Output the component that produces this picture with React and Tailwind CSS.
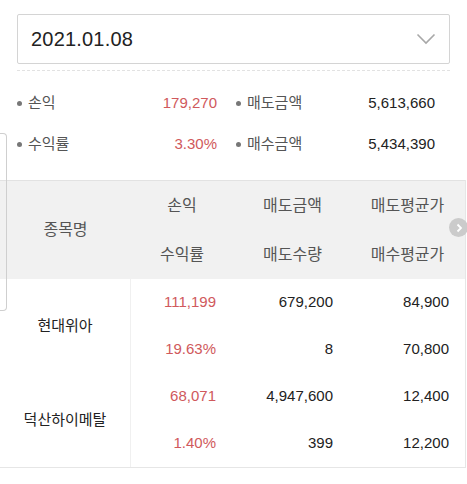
import React from "react";

const font = { fontFamily: '"Liberation Sans", "Noto Sans CJK KR", sans-serif' };

const summary = [
  { label: "손익", value: "179,270", red: true, label2: "매도금액", value2: "5,613,660" },
  { label: "수익률", value: "3.30%", red: true, label2: "매수금액", value2: "5,434,390" },
];

const stocks = [
  { name: "현대위아", rows: [["111,199", "679,200", "84,900"], ["19.63%", "8", "70,800"]] },
  { name: "덕산하이메탈", rows: [["68,071", "4,947,600", "12,400"], ["1.40%", "399", "12,200"]] },
];

const Bullet = () => <span className="w-[5px] h-[5px] rounded-full bg-[#777] mr-[6px] shrink-0" />;

const App = () => (
  <div className="relative w-[467px] h-[484px] bg-white overflow-hidden text-[15px]" style={font}>
    <div className="px-[17px] pt-[14px]">
      <div className="h-[50px] border border-[#d4d4d4] rounded-[2px] flex items-center justify-between pl-[13px] pr-[13px]">
        <span className="text-[20px] text-[#222] tracking-[0.2px]">2021.01.08</span>
        <svg width="20" height="12" viewBox="0 0 20 12" fill="none">
          <path d="M1.5 1.5 L10 10 L18.5 1.5" stroke="#a8a8a8" strokeWidth="1.6" />
        </svg>
      </div>
      <div className="mt-[6px] border-t border-dashed border-[#e2e2e2] w-[433px]" />
      <div className="pt-[12px] pb-[15px]">
        {summary.map((s) => (
          <div key={s.label} className="flex h-[41px] items-center">
            <div className="w-[200px] flex items-center">
              <Bullet />
              <span className="text-[#555]">{s.label}</span>
              <span className={`ml-auto ${s.red ? "text-[#d0595c]" : "text-[#222]"}`}>{s.value}</span>
            </div>
            <div className="w-[199px] ml-[19px] flex items-center">
              <Bullet />
              <span className="text-[#555]">{s.label2}</span>
              <span className="ml-auto text-[#222]">{s.value2}</span>
            </div>
          </div>
        ))}
      </div>
    </div>

    <div className="w-[466px] border-r border-[#e6e6e6]">
      <div className="flex bg-[#f1f1f1] border-t border-[#e2e2e2] h-[99px] text-[#555] text-[16px]">
        <div className="w-[131px] flex items-center justify-center">종목명</div>
        <div className="flex-1 grid grid-cols-[104px_115px_1fr] grid-rows-2">
          <div className="flex items-center justify-center pr-[2px]">손익</div>
          <div className="flex items-center justify-center">매도금액</div>
          <div className="flex items-center justify-center">매도평균가</div>
          <div className="flex items-center justify-center pr-[2px]">수익률</div>
          <div className="flex items-center justify-center">매도수량</div>
          <div className="flex items-center justify-center">매수평균가</div>
        </div>
      </div>
      <div className="border-b border-[#e6e6e6]">
        {stocks.map((st) => (
          <div key={st.name} className="flex h-[94px]">
            <div className="w-[131px] border-r border-[#f0f0f0] flex items-center justify-center text-[#222]">{st.name}</div>
            <div className="flex-1 flex flex-col">
              {st.rows.map((r, i) => (
                <div key={i} className="flex-1 grid grid-cols-[104px_115px_1fr] items-center">
                  <span className="text-right pr-[19px] text-[#d0595c]">{r[0]}</span>
                  <span className="text-right pr-[17px] text-[#222]">{r[1]}</span>
                  <span className="text-right pr-[16px] text-[#222]">{r[2]}</span>
                </div>
              ))}
            </div>
          </div>
        ))}
      </div>
    </div>

    <div className="absolute left-0 top-[133px] w-[7px] h-[178px] border border-l-0 border-[#cfcfcf] rounded-r-[4px]" />
    <div className="absolute left-[449px] top-[218px] w-[19px] h-[19px] rounded-full bg-[#cbcbcb] flex items-center justify-center">
      <svg width="7" height="10" viewBox="0 0 7 10" fill="none" className="ml-[1px]">
        <path d="M1.5 1.5 L5 5 L1.5 8.5" stroke="#fff" strokeWidth="1.8" />
      </svg>
    </div>
  </div>
);

export default App;
